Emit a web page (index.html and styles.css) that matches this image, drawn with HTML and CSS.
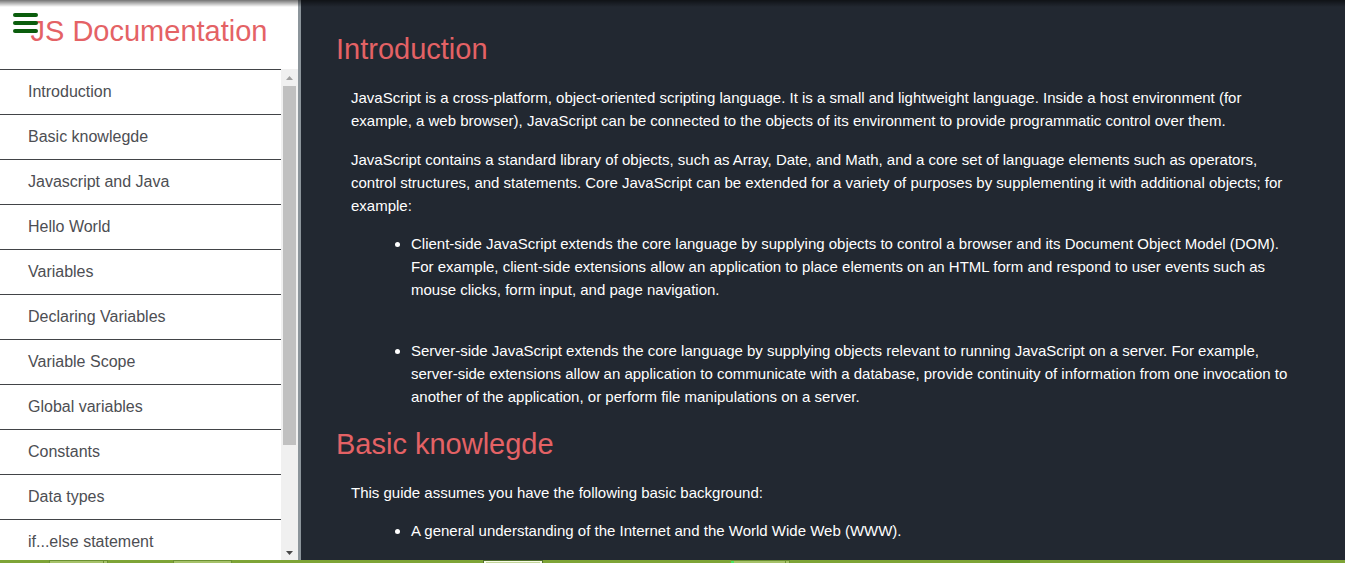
FILE: index.html
```html
<!DOCTYPE html>
<html lang="en">
<head>
<meta charset="utf-8">
<meta name="viewport" content="width=device-width, initial-scale=1">
<title>JS Documentation</title>
<link rel="stylesheet" href="styles.css">
</head>
<body>
<div class="page">
  <aside class="sidebar">
    <button class="menu-toggle" type="button" aria-label="Toggle menu">
      <svg width="25" height="20" viewBox="0 0 25 20" fill="#0b5d0d" aria-hidden="true">
        <rect width="25" height="4" rx="2"/>
        <rect y="8" width="25" height="4" rx="2"/>
        <rect y="16" width="25" height="4" rx="2"/>
      </svg>
    </button>
    <h1 class="site-title">JS Documentation</h1>
    <div class="nav-area">
      <nav class="nav">
        <a class="nav-link" href="#introduction">Introduction</a>
        <a class="nav-link" href="#basic">Basic knowlegde</a>
        <a class="nav-link" href="#java">Javascript and Java</a>
        <a class="nav-link" href="#hello">Hello World</a>
        <a class="nav-link" href="#variables">Variables</a>
        <a class="nav-link" href="#declaring">Declaring Variables</a>
        <a class="nav-link" href="#scope">Variable Scope</a>
        <a class="nav-link" href="#global">Global variables</a>
        <a class="nav-link" href="#constants">Constants</a>
        <a class="nav-link" href="#types">Data types</a>
        <a class="nav-link" href="#ifelse">if...else statement</a>
      </nav>
      <div class="scrollbar" aria-hidden="true">
        <svg class="scroll-arrow" viewBox="0 0 17 17"><path d="M5 11 L8.5 7 L12 11Z" fill="#a0a0a0"/></svg>
        <div class="scroll-track"><div class="scroll-thumb"></div></div>
        <svg class="scroll-arrow" viewBox="0 0 17 17"><path d="M5 8 L8.5 12 L12 8Z" fill="#484848"/></svg>
      </div>
    </div>
  </aside>
  <main class="content">
    <section id="introduction">
      <h2 class="heading">Introduction</h2>
      <div class="article">
        <p class="text">JavaScript is a cross-platform, object-oriented scripting language. It is a small and lightweight language. Inside a host environment (for example, a web browser), JavaScript can be connected to the objects of its environment to provide programmatic control over them.</p>
        <p class="text">JavaScript contains a standard library of objects, such as Array, Date, and Math, and a core set of language elements such as operators, control structures, and statements. Core JavaScript can be extended for a variety of purposes by supplementing it with additional objects; for example:</p>
        <ul class="list">
          <li>Client-side JavaScript extends the core language by supplying objects to control a browser and its Document Object Model (DOM). For example, client-side extensions allow an application to place elements on an HTML form and respond to user events such as mouse clicks, form input, and page navigation.</li>
          <li>Server-side JavaScript extends the core language by supplying objects relevant to running JavaScript on a server. For example, server-side extensions allow an application to communicate with a database, provide continuity of information from one invocation to another of the application, or perform file manipulations on a server.</li>
        </ul>
      </div>
    </section>
    <section id="basic">
      <h2 class="heading">Basic knowlegde</h2>
      <div class="article">
        <p class="text">This guide assumes you have the following basic background:</p>
        <ul class="list">
          <li>A general understanding of the Internet and the World Wide Web (WWW).</li>
        </ul>
      </div>
    </section>
  </main>
  <div class="top-shadow"></div>
</div>
<footer class="taskbar">
  <svg class="taskbar-art" height="3" aria-hidden="true">
    <g fill="#a5c169" stroke="#6c9132">
      <rect x="49.5" y="0.5" width="54" height="6"/>
      <rect x="103.5" y="0.5" width="4" height="6"/>
      <rect x="173.5" y="0.5" width="58" height="6"/>
      <rect x="731.5" y="0.5" width="54" height="6"/>
      <rect x="785.5" y="0.5" width="4" height="6"/>
    </g>
    <rect x="483" width="60" height="3" fill="#50702a"/>
    <rect x="484" y="1" width="58" height="2" fill="#f7fbe8"/>
    <rect x="486" y="2" width="54" height="1" fill="#c4d69b"/>
    <rect x="731" y="1" width="3" height="2" fill="#48e860"/>
    <rect x="990" width="40" height="3" fill="#6a982a"/>
  </svg>
</footer>
</body>
</html>
```

FILE: styles.css
```css
* {
  box-sizing: border-box;
}

body {
  margin: 0;
  height: 100vh;
  display: flex;
  flex-direction: column;
  overflow: hidden;
  font-family: "Liberation Sans", Arial, sans-serif;
  background: #222831;
}

.page {
  position: relative;
  flex: 1;
  min-height: 0;
  display: grid;
  grid-template-columns: 301px 1fr;
  grid-template-rows: minmax(0, 1fr);
}

.sidebar {
  position: relative;
  display: flex;
  flex-direction: column;
  min-height: 0;
  background: #fff;
  border-right: 3px solid #8c959b;
}

.menu-toggle {
  position: absolute;
  top: 13px;
  left: 13px;
  padding: 0;
  border: 0;
  background: none;
  cursor: pointer;
}

.menu-toggle svg {
  display: block;
}

.site-title,
.heading {
  margin: 0;
  font-size: 29px;
  line-height: 33px;
  font-weight: 400;
  color: #e46265;
}

.site-title {
  padding: 15px 0 21px;
  text-align: center;
}

.nav-area {
  flex: 1;
  min-height: 0;
  display: flex;
}

.nav {
  flex: 1;
  overflow: hidden;
}

.nav-link {
  display: block;
  padding: 10px 28px;
  border-top: 1px solid #424448;
  font-size: 16px;
  line-height: 24px;
  color: #4d4e53;
  text-decoration: none;
}

.scrollbar {
  width: 17px;
  display: flex;
  flex-direction: column;
  background: #f0f0f0;
}

.scroll-arrow {
  display: block;
  width: 17px;
  height: 17px;
}

.scroll-track {
  flex: 1;
  padding: 0 2px;
}

.scroll-thumb {
  height: 78.5%;
  background: #c0c0c0;
}

.content {
  padding: 33px 47px 0 35px;
  overflow: hidden;
  color: #fff;
}

.article {
  padding: 20px 0 20px 15px;
  font-size: 15px;
  line-height: 23px;
}

.text {
  margin: 0 0 15px;
}

.text + .text {
  margin-top: 16px;
}

.list {
  margin: 0;
  padding-left: 60px;
}

.list li + li {
  margin-top: 38px;
}

.top-shadow {
  position: absolute;
  top: 0;
  left: 0;
  right: 0;
  height: 7px;
  background: linear-gradient(rgba(0, 0, 0, 0.55), rgba(0, 0, 0, 0));
  pointer-events: none;
}

.taskbar {
  height: 3px;
  overflow: hidden;
  background: #7ea436;
}

.taskbar-art {
  display: block;
  width: 100%;
}
```
